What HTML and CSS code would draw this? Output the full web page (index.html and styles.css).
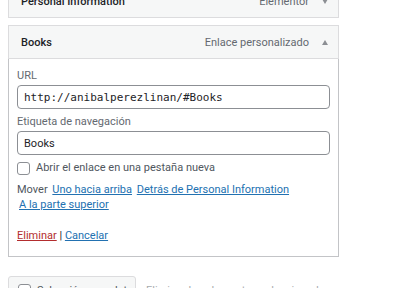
FILE: index.html
```html
<!DOCTYPE html>
<html lang="es">
<head>
    <meta charset="UTF-8">
    <title>Menú</title>
    <link rel="stylesheet" href="styles.css">
</head>
<body>
    <div class="menu">
        <div class="menu-item collapsed">
            <div class="item-bar">
                <span class="item-title">Personal Information</span>
                <span class="item-type">Elementor</span>
                <span class="arrow down"></span>
            </div>
        </div>

        <div class="menu-item open">
            <div class="item-bar">
                <span class="item-title">Books</span>
                <span class="item-type">Enlace personalizado</span>
                <span class="arrow up"></span>
            </div>
            <div class="item-settings">
                <label class="field-label">URL</label>
                <input class="field code" type="text" value="http://anibalperezlinan/#Books">

                <label class="field-label second">Etiqueta de navegación</label>
                <input class="field" type="text" value="Books">

                <label class="check-row">
                    <span class="checkbox"></span>
                    Abrir el enlace en una pestaña nueva
                </label>

                <p class="move-links">
                    Mover
                    <a href="#">Uno hacia arriba</a>
                    <a href="#">Detrás de Personal Information</a>
                    <a href="#">A la parte superior</a>
                </p>

                <p class="actions">
                    <a href="#" class="delete">Eliminar</a> | <a href="#">Cancelar</a>
                </p>
            </div>
        </div>

        <div class="bulk">
            <label class="bulk-select">
                <span class="checkbox"></span>
                Selección completa
            </label>
            <span class="bulk-remove">Eliminar los elementos seleccionados</span>
        </div>
    </div>
</body>
</html>
```

FILE: styles.css
```css
body {
    margin: 0;
    background: #ffffff;
    color: #1d2327;
    font-family: 'Roboto', 'Noto Sans', sans-serif;
    font-size: 11px;
    overflow: hidden;
}
.menu {
    width: 331px;
    padding-left: 8px;
}
.menu-item {
    margin-bottom: 7px;
}
.menu-item.collapsed {
    margin-top: -16px;
}
.item-bar {
    display: flex;
    align-items: center;
    height: 32px;
    padding: 0 10px 0 12px;
    background: #f6f7f7;
    border: 1px solid #dcdcde;
}
.item-title {
    flex: 1;
    font-weight: 500;
}
.item-type {
    color: #646970;
    margin-right: 13px;
}
.arrow {
    width: 0;
    height: 0;
    border-left: 3.5px solid transparent;
    border-right: 3.5px solid transparent;
}
.arrow.down {
    border-top: 5px solid #8c8f94;
}
.arrow.up {
    border-bottom: 5px solid #8c8f94;
}
.item-settings {
    border: 1px solid #c3c4c7;
    border-top: none;
    padding: 8px 8px 12px 8px;
}
.field-label {
    display: block;
    color: #646970;
    line-height: 18px;
}
.field-label.second {
    margin-top: 4px;
}
.field {
    display: block;
    box-sizing: border-box;
    width: 100%;
    height: 24px;
    margin: 0;
    padding: 0 6px;
    border: 1px solid #8c8f94;
    border-radius: 4px;
    font-family: 'Roboto', 'Noto Sans', sans-serif;
    font-size: 11px;
    color: #1d2327;
}
.field.code {
    font-family: 'DejaVu Sans Mono', monospace;
    font-size: 11px;
}
.checkbox {
    display: inline-block;
    box-sizing: border-box;
    width: 13px;
    height: 13px;
    border: 1px solid #8c8f94;
    border-radius: 3px;
    background: #ffffff;
    margin-right: 6px;
}
.check-row {
    display: flex;
    align-items: center;
    margin-top: 4px;
    line-height: 18px;
    color: #50575e;
}
.move-links {
    margin: 5px 0 0 0;
    line-height: 15px;
    color: #50575e;
}
a {
    color: #2271b1;
}
.move-links a {
    margin-left: 2px;
    white-space: nowrap;
}
.actions {
    margin: 16px 0 0 0;
    line-height: 16px;
}
.actions .delete {
    color: #b32d2e;
}
.bulk {
    display: flex;
    align-items: center;
    margin-top: 19px;
}
.bulk-select {
    display: flex;
    align-items: center;
    box-sizing: border-box;
    width: 128px;
    height: 28px;
    padding-left: 9px;
    background: #f6f7f7;
    border: 1px solid #dcdcde;
    border-radius: 3px;
    color: #50575e;
}
.bulk-remove {
    margin-left: 10px;
    color: #a7aaad;
}
```
